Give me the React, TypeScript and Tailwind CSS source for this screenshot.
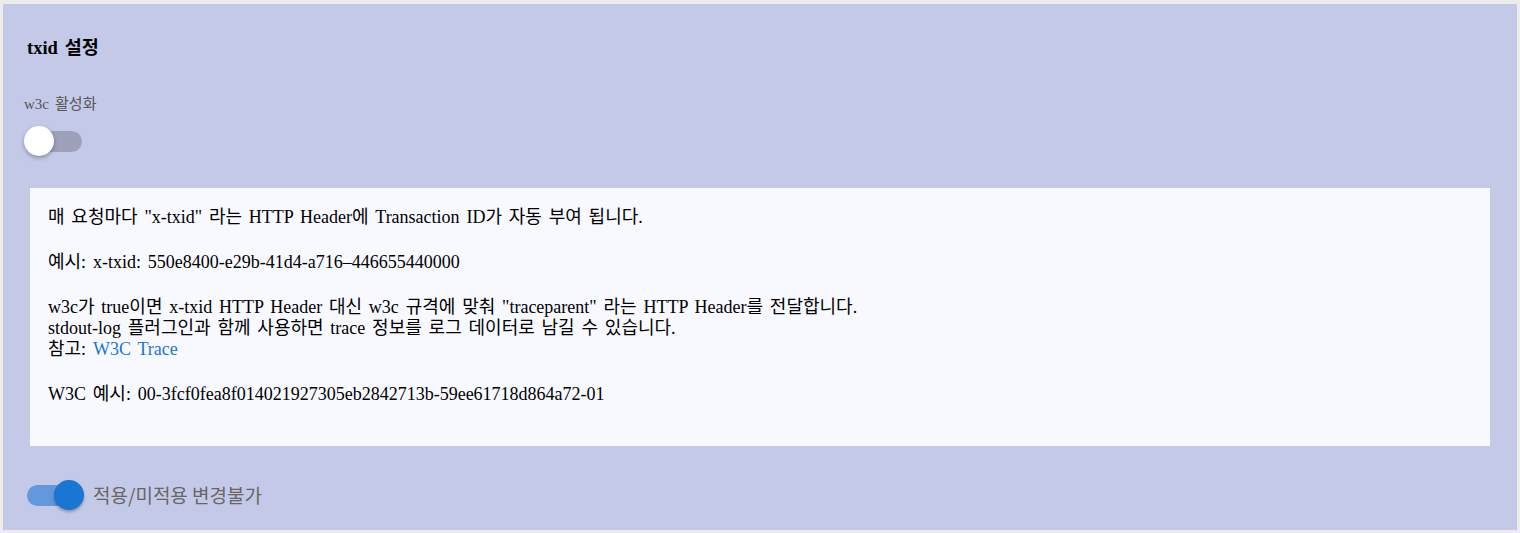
const serif = { fontFamily: '"Liberation Serif", "Noto Sans CJK KR", serif' };

type ToggleProps = {
  on: boolean;
};

const Toggle = ({ on }: ToggleProps) => {
  return (
    <div className="relative w-[60px] h-[30px] flex items-center">
      <div
        className={
          on
            ? "absolute left-[0px] w-[56px] h-[21px] rounded-full bg-[#6199dc]"
            : "absolute left-[2px] w-[56px] h-[21px] rounded-full bg-[#9ea1b9]"
        }
      />
      <div
        className={
          on
            ? "absolute left-[27px] w-[30px] h-[30px] rounded-full bg-[#1976d2] shadow-[0_2px_3px_rgba(0,0,0,0.3)]"
            : "absolute left-0 w-[30px] h-[30px] rounded-full bg-white shadow-[0_2px_4px_rgba(0,0,0,0.3)]"
        }
      />
    </div>
  );
};

const App = () => {
  return (
    <div className="min-h-screen bg-[#ececec] pt-[4px] px-[3px]">
      <div className="bg-[#c5c9e8] h-[526px] flex flex-col pt-[33px] [word-spacing:2.3px]" style={serif}>
        <h2 className="ml-[24px] text-[18.5px] leading-[22px] font-bold text-black">txid 설정</h2>

        <p className="ml-[21px] mt-[35px] text-[15px] leading-[20px] text-[#555]">w3c 활성화</p>
        <div className="ml-[21px] mt-[12px]">
          <Toggle on={false} />
        </div>

        <div className="mx-[27px] mt-[32px] h-[258px] bg-[#f8f9ff] px-[18px] pt-[19px] text-[18px] leading-[21px] text-black">
          <p>매 요청마다 "x-txid" 라는 HTTP Header에 Transaction ID가 자동 부여 됩니다.</p>
          <p className="mt-[24px]">예시: x-txid: 550e8400-e29b-41d4-a716–446655440000</p>
          <p className="mt-[24px]">
            w3c가 true이면 x-txid HTTP Header 대신 w3c 규격에 맞춰 "traceparent" 라는 HTTP Header를 전달합니다.
            <br />
            stdout-log 플러그인과 함께 사용하면 trace 정보를 로그 데이터로 남길 수 있습니다.
            <br />
            참고: <a className="text-[#1976d2]">W3C Trace</a>
          </p>
          <p className="mt-[24px]">W3C 예시: 00-3fcf0fea8f014021927305eb2842713b-59ee61718d864a72-01</p>
        </div>

        <div className="ml-[24px] mt-[34px] flex items-center gap-[6px]">
          <Toggle on={true} />
          <span
            className="text-[19px] text-[#666] [word-spacing:0px]"
            style={{ fontFamily: '"Noto Sans CJK KR", "Noto Sans", sans-serif' }}
          >
            적용/미적용 변경불가
          </span>
        </div>
      </div>
    </div>
  );
};

export default App;
